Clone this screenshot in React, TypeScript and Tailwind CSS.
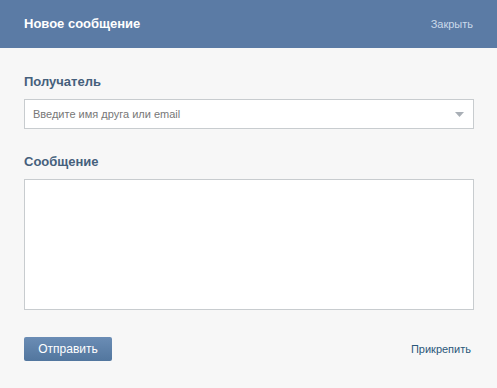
import React from 'react';

export default function App() {
  return (
    <div className="min-h-[388px] w-full bg-[#f7f7f7] font-['Liberation_Sans',Arial,sans-serif]">
      <div className="flex h-12 items-center justify-between bg-[#5b7ba5] pl-6 pr-6">
        <span className="text-[13px] font-bold text-white">Новое сообщение</span>
        <span className="text-[11px] text-[#cad9ea]">Закрыть</span>
      </div>

      <div className="pl-6 pr-[23px] pt-[26px]">
        <div className="text-[13px] font-bold leading-4 text-[#45607c]">Получатель</div>
        <div className="mt-[9px] flex h-[30px] items-center justify-between border border-[#c8cccf] bg-white pl-2 pr-[9px]">
          <span className="text-[11px] text-[#777]">Введите имя друга или email</span>
          <svg width="9" height="5" viewBox="0 0 9 5">
            <path d="M0 0 H9 L4.5 5 Z" fill="#a9afb6" />
          </svg>
        </div>

        <div className="mt-[25px] text-[13px] font-bold leading-4 text-[#45607c]">Сообщение</div>
        <textarea className="mt-[9px] block h-[131px] w-full resize-none border border-[#c8cccf] bg-white p-2 text-[11px] outline-none" />

        <div className="mt-[27px] flex items-center justify-between">
          <button className="h-6 w-[88px] rounded-[2px] bg-gradient-to-b from-[#6b8db5] to-[#52769e] text-[12px] text-white">
            Отправить
          </button>
          <span className="mr-[3px] text-[11px] text-[#2b587a]">Прикрепить</span>
        </div>
      </div>
    </div>
  );
}
